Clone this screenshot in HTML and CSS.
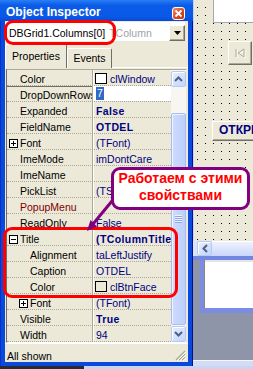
FILE: index.html
```html
<!DOCTYPE html>
<html lang="ru">
<head>
    <meta charset="UTF-8">
    <title>Object Inspector</title>
    <link rel="stylesheet" href="styles.css">
</head>
<body>
    <div class="screen">
        <!-- Object Inspector window -->
        <div class="inspector">
            <div class="caption">
                <span class="caption-text">Object Inspector</span>
                <span class="close-btn">
                    <svg width="11" height="11" viewBox="0 0 11 11"><path d="M2.5 2.5 L8.5 8.5 M8.5 2.5 L2.5 8.5" stroke="#fff" stroke-width="1.8"/></svg>
                </span>
            </div>
            <div class="client">
                <div class="combo">
                    <span class="combo-text">DBGrid1.Columns[0] <span class="combo-type">TColumn</span></span>
                    <span class="combo-drop">
                        <svg width="7" height="4" viewBox="0 0 7 4"><path d="M0 0h7L3.5 4z" fill="#000"/></svg>
                    </span>
                </div>

                <div class="tabs">
                    <div class="tab tab-active">Properties</div>
                    <div class="tab">Events</div>
                </div>

                <div class="grid-wrap">
                    <div class="grid">
                        <div class="row"><div class="name">Color</div><div class="val val-swatch"><span class="swatch"></span>clWindow</div></div>
                        <div class="row row-sel"><div class="name">DropDownRows</div><div class="val val-edit"><span class="sel-text">7</span></div></div>
                        <div class="row"><div class="name">Expanded</div><div class="val bold">False</div></div>
                        <div class="row"><div class="name">FieldName</div><div class="val bold">OTDEL</div></div>
                        <div class="row"><div class="name with-box"><svg class="box" width="9" height="9" viewBox="0 0 9 9"><rect x="0.5" y="0.5" width="8" height="8" fill="#fff" stroke="#000"/><path d="M2 4.5h5M4.5 2v5" stroke="#000"/></svg>Font</div><div class="val">(TFont)</div></div>
                        <div class="row"><div class="name">ImeMode</div><div class="val">imDontCare</div></div>
                        <div class="row"><div class="name">ImeName</div><div class="val"></div></div>
                        <div class="row"><div class="name">PickList</div><div class="val">(TStrings)</div></div>
                        <div class="row"><div class="name name-ref">PopupMenu</div><div class="val"></div></div>
                        <div class="row"><div class="name">ReadOnly</div><div class="val">False</div></div>
                        <div class="row"><div class="name with-box"><svg class="box" width="9" height="9" viewBox="0 0 9 9"><rect x="0.5" y="0.5" width="8" height="8" fill="#fff" stroke="#000"/><path d="M2 4.5h5" stroke="#000"/></svg>Title</div><div class="val bold">(TColumnTitle)</div></div>
                        <div class="row"><div class="name sub">Alignment</div><div class="val">taLeftJustify</div></div>
                        <div class="row"><div class="name sub">Caption</div><div class="val">OTDEL</div></div>
                        <div class="row"><div class="name sub">Color</div><div class="val val-swatch"><span class="swatch swatch-face"></span>clBtnFace</div></div>
                        <div class="row"><div class="name sub with-box"><svg class="box" width="9" height="9" viewBox="0 0 9 9"><rect x="0.5" y="0.5" width="8" height="8" fill="#fff" stroke="#000"/><path d="M2 4.5h5M4.5 2v5" stroke="#000"/></svg>Font</div><div class="val">(TFont)</div></div>
                        <div class="row"><div class="name">Visible</div><div class="val bold">True</div></div>
                        <div class="row"><div class="name">Width</div><div class="val">94</div></div>
                    </div>

                    <!-- vertical scrollbar -->
                    <div class="vscroll">
                        <div class="sb-btn">
                            <svg width="9" height="6" viewBox="0 0 9 6"><path d="M1 5 L4.5 1.5 L8 5" fill="none" stroke="#4d6185" stroke-width="2"/></svg>
                        </div>
                        <div class="sb-thumb"><span class="sb-grip"></span></div>
                        <div class="sb-btn sb-down">
                            <svg width="9" height="6" viewBox="0 0 9 6"><path d="M1 1 L4.5 4.5 L8 1" fill="none" stroke="#4d6185" stroke-width="2"/></svg>
                        </div>
                    </div>
                </div>

                <div class="status">
                    <span>All shown</span>
                    <svg class="size-grip" width="11" height="11" viewBox="0 0 11 11">
                        <path d="M10 1 L1 10 M10 4 L4 10 M10 7 L7 10" stroke="#aca899" stroke-width="1.2"/>
                        <path d="M11 2 L2 11 M11 5 L5 11 M11 8 L8 11" stroke="#fff" stroke-width="1"/>
                    </svg>
                </div>
            </div>
        </div>

        <!-- Form designer behind -->
        <div class="form">
            <div class="design">
                <div class="design-edit"></div>
                <div class="design-nav">
                    <svg width="12" height="11" viewBox="0 0 12 11">
                        <path d="M3 2v8M11 2 L5 6 L11 10z" fill="none" stroke="#fff" stroke-width="1"/>
                        <path d="M2 1v8M10 1 L4 5 L10 9z" fill="none" stroke="#aca899" stroke-width="1"/>
                    </svg>
                </div>
                <div class="design-btn">ОТКРЫТЬ</div>
            </div>
            <div class="hscroll">
                <div class="sb-btn sb-left">
                    <svg width="6" height="9" viewBox="0 0 6 9"><path d="M5 1 L1.5 4.5 L5 8" fill="none" stroke="#4d6185" stroke-width="2"/></svg>
                </div>
                <div class="hscroll-track"></div>
            </div>
            <div class="form-edge"></div>
            <div class="below">
                <div class="panel"></div>
                <div class="form-foot"></div>
            </div>
        </div>
    </div>
    <div class="taskbar"><span class="taskbar-left"></span></div>

    <!-- Annotations drawn over the screenshot -->
    <div class="mark mark-combo"></div>
    <div class="mark mark-title"></div>
    <div class="callout">Работаем с этими<br>свойствами</div>
    <svg class="arrow" width="253" height="369" viewBox="0 0 253 369">
        <line x1="112" y1="201" x2="93" y2="224" stroke="#800080" stroke-width="3"/>
        <polygon points="87,231 97,226.5 90.5,220" fill="#800080"/>
    </svg>
</body>
</html>
```

FILE: styles.css
```css
* {
    box-sizing: border-box;
}
html, body {
    margin: 0;
    padding: 0;
}
body {
    width: 253px;
    height: 369px;
    overflow: hidden;
    position: relative;
    font-family: "Liberation Sans", Arial, sans-serif;
    font-size: 10.5px;
    color: #000;
    background: #c9d5f2;
}
.screen {
    display: flex;
    height: 366px;
}

/* Inspector window frame */
.inspector {
    width: 193px;
    display: flex;
    flex-direction: column;
    background: #0b49dd;
    box-shadow: inset -1px 0 #00138c, inset 1px 0 #0833c8;
}
.caption {
    height: 21px;
    flex: none;
    display: flex;
    align-items: flex-start;
    padding-left: 6px;
    background: linear-gradient(#2a7ff5, #0a5ce8 25%, #0a58e6 80%, #0849d8);
    color: #fff;
    font-size: 12px;
    font-weight: bold;
}
.caption-text {
    margin-top: 4px;
    line-height: 17px;
}
.close-btn {
    margin: 7px 8px 0 auto;
    width: 13px;
    height: 13px;
    border: 1px solid #fff;
    border-radius: 3px;
    background: linear-gradient(135deg, #f08a6a, #d8441f 60%, #c1330f);
    display: flex;
    align-items: center;
    justify-content: center;
}
.client {
    flex: 1;
    margin: 0 5px 4px 5px;
    background: #ece9d8;
    display: flex;
    flex-direction: column;
    overflow: hidden;
}

/* Component selector */
.combo {
    margin-top: 1px;
    height: 19px;
    width: 180px;
    flex: none;
    background: #fff;
    display: flex;
    align-items: flex-end;
}
.combo-text {
    flex: 1;
    align-self: flex-start;
    padding: 4px 0 0 4px;
    line-height: 15px;
    white-space: nowrap;
    overflow: hidden;
}
.combo-type {
    color: #a3a3a3;
    margin-left: 1px;
}
.combo-drop {
    width: 16px;
    height: 16px;
    flex: none;
    background: #ece9d8;
    border: 1px solid;
    border-color: #fff #716f64 #716f64 #fff;
    box-shadow: inset -1px -1px #aca899;
    display: flex;
    align-items: center;
    justify-content: center;
}

/* Tabs */
.tabs {
    margin-top: 3px;
    height: 24px;
    flex: none;
    display: flex;
    align-items: flex-end;
    box-shadow: inset 0 -1px #fff;
}
.tab {
    width: 45px;
    height: 20px;
    padding-top: 3px;
    line-height: 13px;
    text-align: center;
    border: 1px solid;
    border-bottom: 0;
    border-color: #fff #716f64 transparent #fff;
    border-radius: 2px 2px 0 0;
    background: #ece9d8;
}
.tab-active {
    width: 62px;
    height: 24px;
    padding-top: 5px;
}

/* Property grid */
.grid-wrap {
    margin: 1px 0 0 1px;
    width: 180px;
    height: 274px;
    flex: none;
    display: flex;
    border-top: 1px solid #aca899;
    border-left: 1px solid #716f64;
    border-bottom: 1px solid #fff;
}
.grid {
    width: 164px;
    flex: none;
}
.row {
    display: flex;
    height: 16px;
    border-bottom: 1px dotted #aca899;
    overflow: hidden;
}
.name {
    width: 86px;
    flex: none;
    display: flex;
    align-items: flex-start;
    padding: 2px 0 0 13px;
    line-height: 14px;
    white-space: nowrap;
    overflow: hidden;
    border-right: 1px solid #aca899;
}
.name.sub {
    padding-left: 23px;
}
.name.with-box {
    padding-left: 2px;
}
.name.sub.with-box {
    padding-left: 12px;
}
.name-ref {
    color: #800000;
}
.box {
    flex: none;
    margin: 3px 2px 0 0;
}
.val {
    flex: 1;
    display: flex;
    align-items: flex-start;
    padding: 2px 0 0 2px;
    line-height: 14px;
    color: #000080;
    white-space: nowrap;
    overflow: hidden;
    border-left: 1px solid #fff;
}
.bold {
    font-weight: bold;
    letter-spacing: 0.4px;
}
.val-swatch {
    padding-left: 1px;
}
.swatch {
    width: 12px;
    height: 11px;
    flex: none;
    margin: 1px 3px 0 0;
    border: 1px solid #000;
    background: #fff;
}
.swatch-face {
    background: #ece9d8;
}
.row-sel .name {
    box-shadow: inset 0 1px #716f64;
}
.val-edit {
    background: #fff;
    padding-top: 1px;
}
.sel-text {
    background: #316ac5;
    color: #fff;
    padding: 0 1px;
    line-height: 13px;
}

/* XP scrollbars */
.vscroll {
    width: 15px;
    flex: none;
    display: flex;
    flex-direction: column;
    padding-top: 1px;
    background: #f7f6f1;
}
.sb-btn {
    height: 16px;
    flex: none;
    border: 1px solid #b6c9f4;
    border-radius: 2px;
    background: linear-gradient(135deg, #e6eeff, #c3d4fc);
    box-shadow: inset 1px 1px #fff;
    display: flex;
    align-items: center;
    justify-content: center;
}
.sb-thumb {
    margin-top: 26px;
    height: 212px;
    flex: none;
    border: 1px solid #a6bdf1;
    border-radius: 2px;
    background: linear-gradient(to right, #cddbfd, #bdcffb);
    box-shadow: inset 1px 1px #eef3ff;
    display: flex;
    align-items: center;
    justify-content: center;
}
.sb-grip {
    width: 7px;
    height: 8px;
    background: repeating-linear-gradient(#eef3ff 0 1px, #8ea6e3 1px 2px);
}
.sb-down {
    margin-top: auto;
}

/* Status line */
.status {
    height: 18px;
    flex: none;
    display: flex;
    padding: 6px 2px 0 2px;
    line-height: 12px;
    border-top: 1px solid #fff;
}
.size-grip {
    margin-left: auto;
    align-self: flex-end;
}

/* Form designer */
.form {
    flex: 1;
    display: flex;
    flex-direction: column;
}
.design {
    height: 241px;
    flex: none;
    display: flex;
    flex-direction: column;
    align-items: flex-end;
    background-color: #ece9d8;
    background-image: conic-gradient(at 1px 1px, transparent 75%, #000 0);
    background-size: 8px 8px;
    background-position: 4px 7px;
    box-shadow: inset 1px 0 #c6d2f6;
}
.design-edit {
    width: 40px;
    height: 23px;
    background: #fff;
    border-left: 1px solid #a7a6aa;
    border-bottom: 1px solid #a7a6aa;
}
.design-nav {
    margin: 18px 1px 0 0;
    width: 24px;
    height: 24px;
    background: #ece9d8;
    border: 1px solid;
    border-color: #fff #716f64 #716f64 #fff;
    box-shadow: inset -1px -1px #aca899;
    display: flex;
    align-items: center;
    justify-content: center;
}
.design-btn {
    margin-top: 56px;
    width: 41px;
    height: 20px;
    padding-left: 6px;
    background: #ece9d8;
    border-top: 1px solid #fff;
    border-left: 1px solid #fff;
    border-bottom: 1px solid #716f64;
    box-shadow: inset 0 -1px #aca899;
    color: #000080;
    font-size: 12px;
    font-weight: bold;
    line-height: 17px;
    white-space: nowrap;
    overflow: hidden;
}
.hscroll {
    height: 15px;
    flex: none;
    display: flex;
    padding-left: 4px;
    background: #dde4f8;
}
.sb-left {
    width: 15px;
    height: 15px;
}
.hscroll-track {
    flex: 1;
    background: linear-gradient(#eef2fd, #c9d7fb);
    border-top: 1px solid #fff;
}
.form-edge {
    height: 4px;
    flex: none;
    background: #7287e0;
}
.below {
    flex: 1;
    display: flex;
    flex-direction: column;
    justify-content: space-between;
    background: #8e95a8;
}
.panel {
    margin-left: 7px;
    height: 53px;
    background: #fff;
    border-left: 4px solid #7a8de2;
    border-bottom: 5px solid #7a8de2;
    box-shadow: inset 1px 0 #8a8878, inset 0 2px #e4e4e4;
}
.form-foot {
    height: 6px;
    background: #d4dcf3;
    border-top: 1px solid #f4f6fc;
}
.taskbar {
    height: 3px;
    display: flex;
    background: #c9d5f2;
}
.taskbar-left {
    width: 84px;
    background: #2a2a30;
}

/* Annotations */
.mark {
    position: absolute;
    border: 3px solid #ff0000;
    border-radius: 9px;
}
.mark-combo {
    left: 4px;
    top: 20px;
    width: 112px;
    height: 25px;
}
.mark-title {
    left: 3px;
    top: 227px;
    width: 175px;
    height: 71px;
}
.callout {
    position: absolute;
    left: 111px;
    top: 167px;
    width: 139px;
    height: 43px;
    border: 3px solid #800080;
    border-radius: 9px;
    background: #fff;
    color: #ff0000;
    font-size: 14px;
    font-weight: bold;
    line-height: 17px;
    text-align: center;
}
.arrow {
    position: absolute;
    left: 0;
    top: 0;
}
```
